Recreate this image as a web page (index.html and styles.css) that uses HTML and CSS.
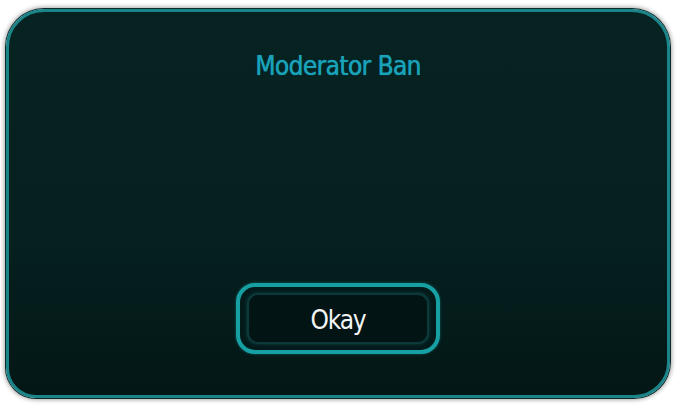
FILE: index.html
```html
<!DOCTYPE html>
<html>
<head>
<meta charset="utf-8">
<link rel="stylesheet" href="styles.css">
</head>
<body>
<div class="dialog">
  <h1 class="title">Moderator Ban</h1>
  <div class="body"></div>
  <div class="actions">
    <button class="btn"><span class="btn-inner">Okay</span></button>
  </div>
</div>
</body>
</html>
```
FILE: styles.css
```css
html, body {
  margin: 0;
  padding: 0;
  background: #ffffff;
}
body {
  width: 678px;
  height: 409px;
  overflow: hidden;
}
.dialog {
  box-sizing: border-box;
  margin: 9px 0 0 6px;
  width: 664px;
  height: 389px;
  border: 3px solid #1a8489;
  border-radius: 38px 38px 36px 30px;
  background: linear-gradient(180deg, #062221 0%, #05201f 60%, #031716 100%);
  box-shadow: 0 0 0 1px #0b2a2b, 0 0 4px 2px rgba(0,0,0,0.35);
  display: flex;
  flex-direction: column;
  align-items: center;
  padding: 39px 0 41px;
  font-family: "DejaVu Sans Condensed", "DejaVu Sans", sans-serif;
  font-stretch: condensed;
}
.title {
  margin: 0;
  font-size: 26px;
  line-height: 30px;
  font-weight: normal;
  letter-spacing: -0.6px;
  color: #19a2b8;
  text-shadow: 0.3px 0 0 #19a2b8, 0 0 2px rgba(10, 80, 100, 0.8);
}
.body {
  flex: 1;
}
.actions {
  display: flex;
  justify-content: center;
}
.btn {
  box-sizing: border-box;
  width: 204px;
  height: 71px;
  border: 4px solid #17a0a3;
  border-radius: 19px;
  background: #031a1a;
  padding: 6px 7px;
  display: flex;
  box-shadow: 0 0 3px rgba(23, 160, 163, 0.5);
}
.btn-inner {
  flex: 1;
  display: flex;
  align-items: center;
  justify-content: center;
  border-radius: 11px;
  border: 2px solid #0c3a3b;
  background: #021414;
  box-shadow: 0 0 3px 1px #0a3334;
  color: #f2f6f6;
  font-family: "DejaVu Sans Condensed", "DejaVu Sans", sans-serif;
  font-stretch: condensed;
  font-size: 26px;
  letter-spacing: -1.2px;
  padding-top: 2px;
}
```
